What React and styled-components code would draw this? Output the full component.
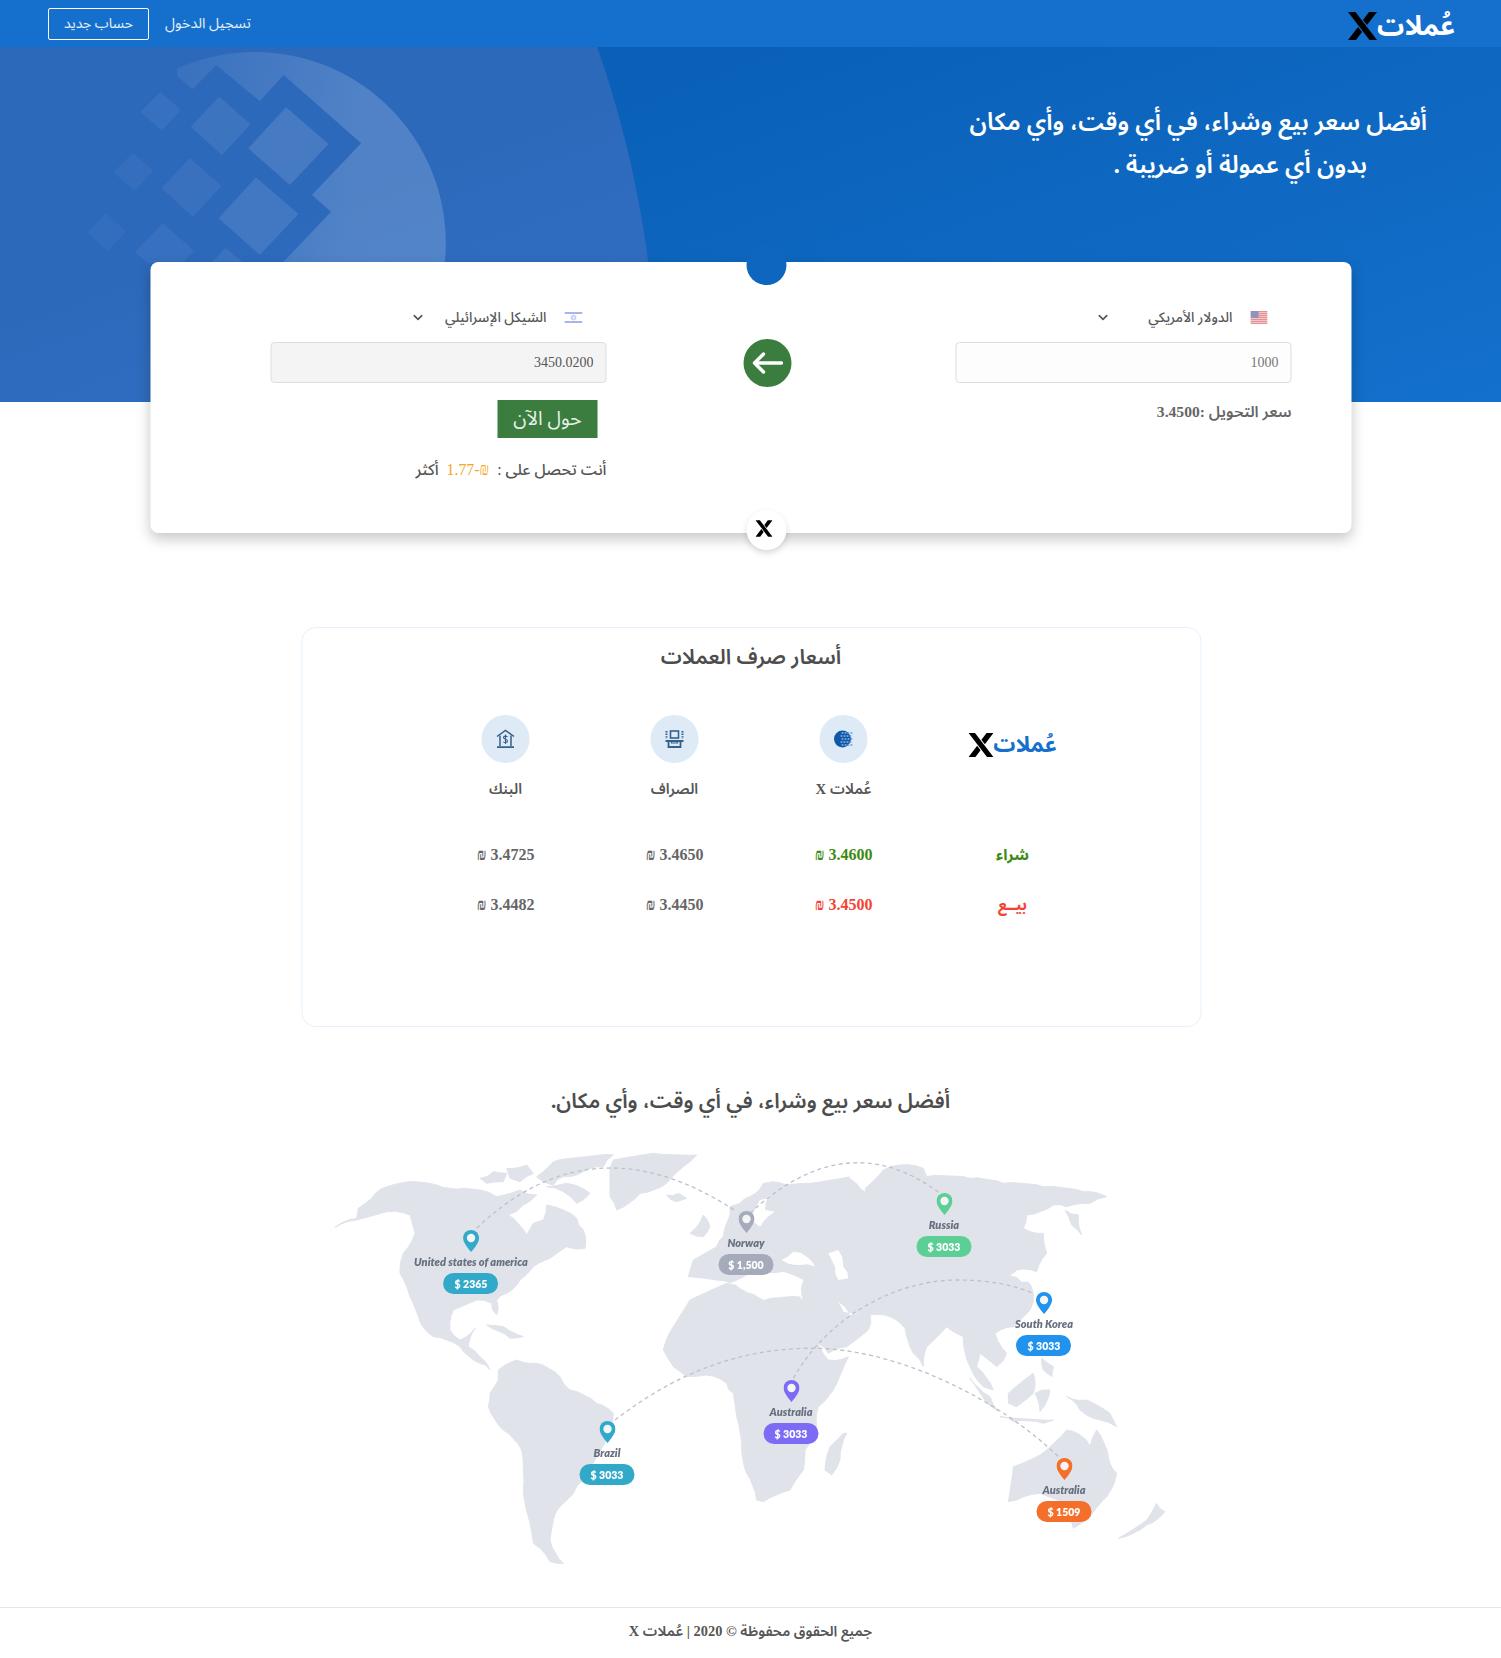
import React from "react";
import styled, { createGlobalStyle } from "styled-components";
import { ChevronDown } from "lucide-react";

const arabic = `"Liberation Serif", "Noto Sans Arabic", "Noto Sans", "DejaVu Sans", serif`;

const GlobalStyle = createGlobalStyle`
  * { box-sizing: border-box; }
  body {
    margin: 0;
    background: #fff;
    font-family: ${arabic};
    color: #555;
  }
`;

const Page = styled.div`
  width: 100%;
  min-height: 1658px;
`;

const Header = styled.header`
  height: 47px;
  background: #1570cd;
  display: flex;
  justify-content: space-between;
  align-items: center;
  padding: 0 46px 0 48px;
`;

const LogoWrap = styled.div`
  display: flex;
  align-items: center;
  direction: ltr;
  padding-top: ${(p) => p.$top || 0}px;
  align-self: ${(p) => (p.$top ? "center" : "start")};
  margin-top: ${(p) => (p.$top ? 0 : 18)}px;
`;

const LogoText = styled.span`
  font-size: ${(p) => p.$size}px;
  font-weight: 700;
  line-height: 1;
  color: ${(p) => p.$color};
`;

const HeaderLinks = styled.nav`
  display: flex;
  align-items: center;
  gap: 16px;
`;

const SignIn = styled.a`
  color: #e6effa;
  font-size: 14.5px;
`;

const SignUp = styled.a`
  color: #e6effa;
  font-size: 14px;
  width: 101px;
  height: 32px;
  border: 1px solid #fff;
  border-radius: 2px;
  display: flex;
  align-items: center;
  justify-content: center;
`;

const Hero = styled.section`
  position: relative;
  height: 355px;
  overflow: hidden;
  background: linear-gradient(160deg, #0a60b7 30%, #1370cc 100%);
`;

const HeroArt = styled.svg`
  position: absolute;
  top: -47px;
  left: 0;
  width: 750px;
  height: 402px;
`;

const HeroTitle = styled.h1`
  position: relative;
  margin: 0;
  padding: 53px 74px 0 0;
  color: #fff;
  font-size: 24.4px;
  font-weight: 600;
  line-height: 43px;
`;

const HeroLine = styled.span`
  display: block;
  margin-right: ${(p) => p.$inset || 0}px;
`;

const Converter = styled.section`
  position: relative;
  width: 1201px;
  height: 271px;
  margin: -140px auto 0;
  transform: translateX(0.5px);
  background: #fff;
  border-radius: 8px;
  box-shadow: 0 6px 14px rgba(0, 0, 0, 0.22);
  display: grid;
  grid-template-columns: 336px 336px;
  justify-content: space-between;
  padding: 0 60px 0 120px;
`;

const TopDot = styled.div`
  position: absolute;
  top: -17px;
  left: 596px;
  width: 40px;
  height: 40px;
  border-radius: 50%;
  background: #0f66bf;
`;

const BottomDot = styled.div`
  position: absolute;
  bottom: -17px;
  left: 596px;
  width: 40px;
  height: 40px;
  border-radius: 50%;
  background: #fff;
  box-shadow: 0 3px 6px rgba(0, 0, 0, 0.15);
  display: flex;
  align-items: center;
  justify-content: center;
  padding: 0 5px 3px 0;
`;

const SwapButton = styled.div`
  position: absolute;
  top: 77px;
  left: 592.5px;
  width: 48px;
  height: 48px;
  border-radius: 50%;
  background: #3b7d3e;
  color: #fff;
  display: flex;
  align-items: center;
  justify-content: center;
`;

const Column = styled.div`
  display: flex;
  flex-direction: column;
`;

const CurrencySelect = styled.div`
  width: 172px;
  height: 36px;
  margin: 37px 24px 7px 0;
  display: flex;
  align-items: center;
  gap: 18px;
  font-size: 13.8px;
  font-weight: 500;
  white-space: nowrap;
  color: #555;
`;

const Chevron = styled.span`
  margin-right: auto;
  display: flex;
  color: #555;
`;

const AmountInput = styled.input`
  width: 100%;
  height: 41px;
  border: 1px solid #ddd;
  border-radius: 4px;
  background: ${(p) => (p.$disabled ? "#f4f4f4" : "#fdfdfd")};
  color: ${(p) => (p.$disabled ? "#555" : "#777")};
  font-family: "Liberation Serif", serif;
  font-size: 14px;
  text-align: right;
  padding: 0 12px;
  outline: none;
`;

const RateLine = styled.div`
  margin-top: 17px;
  font-size: 15.6px;
  line-height: 24px;
  font-weight: 600;
  color: #666;
`;

const ConvertButton = styled.button`
  width: 100px;
  height: 38px;
  margin: 17px 9px 0 0;
  border: 0;
  background: #3b7d3e;
  color: #e8f1e8;
  font-family: ${arabic};
  font-size: 19.5px;
  line-height: 1;
`;

const Gain = styled.div`
  margin-top: 20px;
  font-size: 15.8px;
  line-height: 24px;
  font-weight: 500;
  color: #555;
  display: flex;
  align-items: baseline;
  gap: 8px;
`;

const GainValue = styled.span`
  color: #f5a623;
`;

const RatesBox = styled.section`
  width: 900px;
  height: 400px;
  margin: 94px auto 0;
  transform: translateX(0.5px);
  border: 1px solid #e4f1fd;
  border-radius: 14px;
  padding: 0 103px 0 120px;
`;

const SectionTitle = styled.h2`
  margin: ${(p) => p.$margin};
  text-align: center;
  font-size: ${(p) => p.$size}px;
  font-weight: 600;
  line-height: 30px;
  color: #4d4d4d;
`;

const RatesGrid = styled.div`
  display: grid;
  grid-template-columns: repeat(4, 169px);
  grid-template-rows: 110px 59px 41px;
  margin-top: 43px;
  justify-items: center;
  align-items: center;
`;

const Source = styled.div`
  display: flex;
  flex-direction: column;
  align-items: center;
  align-self: start;
  gap: 11px;
`;

const IconCircle = styled.div`
  width: 48px;
  height: 48px;
  border-radius: 50%;
  background: #deeaf5;
  display: flex;
  align-items: center;
  justify-content: center;
`;

const SourceName = styled.div`
  font-size: 14.8px;
  font-weight: 600;
  color: #555;
`;

const RowLabel = styled.div`
  font-size: 15.5px;
  font-weight: 700;
  color: ${(p) => p.$color};
`;

const Price = styled.div`
  font-size: 16px;
  font-weight: 700;
  color: ${(p) => p.$color || "#666"};
`;

const MapBox = styled.div`
  position: relative;
  width: 859px;
  height: 440px;
  margin: 24px auto 0;
`;

const MapArt = styled.svg`
  display: block;
  width: 859px;
  height: 440px;
  filter: blur(0.6px);
`;

const Marker = styled.div`
  position: absolute;
  left: ${(p) => p.$x}px;
  top: ${(p) => p.$y}px;
  transform: translateX(-50%);
  display: flex;
  flex-direction: column;
  align-items: center;
  font-family: Lato, sans-serif;
  filter: blur(0.3px);
`;

const MarkerName = styled.div`
  margin-top: 4px;
  font-size: 11px;
  line-height: 12px;
  font-weight: 800;
  font-style: italic;
  white-space: nowrap;
  color: #68717f;
`;

const MarkerPrice = styled.div`
  margin-top: 5px;
  width: 55px;
  height: 21px;
  border-radius: 11px;
  background: ${(p) => p.$color};
  color: #fff;
  font-size: 10.5px;
  font-weight: 800;
  display: flex;
  align-items: center;
  justify-content: center;
`;

const Footer = styled.footer`
  margin-top: 27px;
  height: 51px;
  padding-bottom: 4px;
  border-top: 1px solid #e6e6e6;
  display: flex;
  align-items: center;
  justify-content: center;
  font-size: 14.4px;
  font-weight: 600;
  color: #555;
`;

const XMark = ({ width, height }) => (
  <svg width={width} height={height} viewBox="0 0 29 28">
    <path d="M0 0h7.5l21.5 28h-7.5z" fill="#000" />
    <path d="M21 0h8L19 13l-4-5zM0 28h8l6-8-4-5z" fill="#000" />
  </svg>
);

const Logo = ({ color, size, xWidth, xHeight, top }) => (
  <LogoWrap $top={top}>
    <XMark width={xWidth} height={xHeight} />
    <LogoText $color={color} $size={size} dir="rtl">
      عُملات
    </LogoText>
  </LogoWrap>
);

const HeroShapes = () => (
  <HeroArt viewBox="0 0 1568 1206" preserveAspectRatio="none">
    <defs>
      <linearGradient id="glow" x1="0" y1="0.4" x2="1" y2="0.5">
        <stop offset="0.1" stopColor="#fff" stopOpacity="0.02" />
        <stop offset="0.75" stopColor="#fff" stopOpacity="0.17" />
      </linearGradient>
      <clipPath id="lattice">
        <polygon points="370,228 403,268 452,195 543,303 593,225 755,430 652,585 692,635 590,790 1100,1206 1100,100 370,100" />
      </clipPath>
    </defs>
    <ellipse cx="-861" cy="1200" rx="2235" ry="3207" fill="#e79cd4" fillOpacity="0.16" />
    <ellipse cx="533" cy="729" rx="399" ry="573" fill="url(#glow)" clipPath="url(#lattice)" />
    <g fill="#fff">
      <polygon fillOpacity="0.05" points="335,275 378,330 338,392 294,335" />
      <polygon fillOpacity="0.08" points="458,290 524,373 464,465 399,380" />
      <polygon fillOpacity="0.12" points="598,322 687,432 606,555 519,445" />
      <polygon fillOpacity="0.04" points="278,458 320,513 281,573 237,517" />
      <polygon fillOpacity="0.06" points="397,475 463,558 403,650 338,565" />
      <polygon fillOpacity="0.1" points="535,532 624,642 543,765 457,655" />
      <polygon fillOpacity="0.03" points="222,640 263,695 224,752 182,697" />
      <polygon fillOpacity="0.05" points="340,670 406,753 380,790 310,790 282,757" />
      <polygon fillOpacity="0.07" points="472,745 510,790 440,790" />
    </g>
  </HeroArt>
);

const UsFlag = () => (
  <svg width="17" height="13" viewBox="0 0 17 13">
    <rect width="17" height="13" fill="#f3c6c8" />
    {[0, 2, 4, 6, 8, 10, 12].map((y) => (
      <rect key={y} y={y} width="17" height="1" fill="#e58f94" />
    ))}
    <rect width="8" height="7" fill="#8f93bd" />
  </svg>
);

const IlFlag = () => (
  <svg width="18" height="13" viewBox="0 0 18 13">
    <rect y="1" width="18" height="2" fill="#a9b4ee" />
    <rect y="10" width="18" height="2" fill="#a9b4ee" />
    <path d="M9 3.6l2.6 4.4H6.400zM9 9.4L6.4 5h5.2z" fill="none" stroke="#b9c2f0" strokeWidth="0.8" />
  </svg>
);

const SwapArrow = () => (
  <svg width="32" height="24" viewBox="0 0 32 24" fill="none" stroke="#fff" strokeWidth="3.4" strokeLinecap="round" strokeLinejoin="round">
    <path d="M30 12H3M12 3l-9 9 9 9" />
  </svg>
);

const GlobeIcon = () => (
  <svg width="20" height="20" viewBox="0 0 20 20">
    <circle cx="9" cy="10" r="8.5" fill="#0d58a8" />
    {[3, 6, 9, 12, 15].map((y) =>
      [8, 11, 14, 17].map((x) => (
        <circle key={`${x}-${y}`} cx={x + (y % 2)} cy={y + 1} r="1.1" fill="#7ea6d8" />
      ))
    )}
  </svg>
);

const ExchangeIcon = () => (
  <svg width="20" height="20" viewBox="0 0 20 20" fill="none" stroke="#34618c">
    <rect x="6" y="2" width="8" height="7" strokeWidth="1.6" />
    <path d="M2 2v8M18 2v8" strokeWidth="2" strokeDasharray="1.4 1.2" />
    <path d="M1 12h18" strokeWidth="1.8" />
    <path d="M4 12v6h12v-6" strokeWidth="1.8" />
    <path d="M7 12v2h6v-2" strokeWidth="1.2" />
  </svg>
);

const BankIcon = () => (
  <svg width="20" height="20" viewBox="0 0 20 20" fill="none" stroke="#34618c" strokeWidth="1.5">
    <path d="M1.5 7.5L10 1.5l8.5 6" />
    <path d="M4.5 6.5V17M15.5 6.5V17" />
    <path d="M1.5 18.2h17" strokeWidth="1.8" />
    <path d="M12 7.8C11 6.8 8 6.8 8 8.6c0 2 4 1.3 4 3.400 0 1.800-3.100 1.800-4.200.8M10 5.600v9.400" strokeWidth="1.1" />
  </svg>
);

const PinIcon = ({ color }) => (
  <svg width="16" height="22" viewBox="0 0 16 22">
    <path d="M8 0a8 8 0 0 1 8 8c0 4.4-5 10.5-8 14C5 18.5 0 12.4 0 8a8 8 0 0 1 8-8z" fill={color} />
    <circle cx="8" cy="8" r="4.2" fill="#f4f5f7" />
  </svg>
);

const land = "#e0e3e9";

// coastline traced as points, then broken up a little so it doesn't look straight-edged
const rough = (points) => {
  const nums = points.match(/-?\d+/g).map(Number);
  const pts = [];
  for (let i = 0; i < nums.length; i += 2) pts.push([nums[i], nums[i + 1]]);
  let d = "";
  pts.forEach(([x, y], i) => {
    const [nx, ny] = pts[(i + 1) % pts.length];
    const len = Math.hypot(nx - x, ny - y);
    const steps = Math.max(1, Math.round(len / 22));
    for (let s = 0; s < steps; s++) {
      const t = s / steps;
      const wob = s === 0 ? 0 : Math.sin(x * 12.9 + y * 78.2 + s * 37.7) * 5;
      const px = x + (nx - x) * t + (wob * (ny - y)) / len;
      const py = y + (ny - y) * t - (wob * (nx - x)) / len;
      d += `${d ? "L" : "M"}${px.toFixed(1)} ${py.toFixed(1)}`;
    }
  });
  return d + "z";
};

const americas = [
  "45 262 110 235 115 205 155 175 200 140 270 125 350 135 430 145 480 150 530 170 600 150 650 165 610 195 565 225 620 285 640 250 670 240 680 195 730 210 770 235 790 270 795 325 740 320 690 355 640 380 600 420 560 460 530 480 530 525 515 490 470 480 400 510 390 570 420 600 465 565 445 620 480 650 510 690 480 670 420 620 340 590 300 545 270 470 240 400 250 340 285 280 270 225 200 215 110 240",
  "535 690 590 660 650 670 720 710 750 750 830 790 880 820 860 900 790 1020 760 1060 730 1090 700 1140 690 1200 730 1270 690 1265 640 1210 625 1130 610 1050 605 930 550 870 505 800 510 760 535 720",
  "480 115 520 95 560 100 550 125 500 130",
  "560 85 620 75 640 100 600 125 570 115",
  "650 110 700 65 880 45 850 80 790 95 730 110 700 135",
  "680 140 740 130 810 160 770 190 730 155",
  "870 110 880 60 1000 40 1130 45 1090 80 1040 130 960 160 890 210 870 170",
  "1040 165 1075 160 1100 175 1070 185",
  "1110 280 1150 225 1170 260 1150 290",
  "500 555 550 560 610 590 570 595 540 575",
];

const eastern = [
  "-185 410 -170 360 -100 320 -80 290 -70 250 -60 200 -30 190 0 170 40 130 70 125 110 135 180 130 300 110 340 150 400 90 450 75 520 85 530 110 660 115 760 130 880 140 1000 155 1070 170 1020 190 950 200 910 195 830 225 820 265 880 280 890 340 860 395 800 390 780 410 830 420 850 460 840 510 790 560 735 580 770 640 740 680 690 640 680 680 730 750 700 740 660 680 640 590 590 560 530 620 520 680 490 640 465 565 420 530 360 525 355 570 290 620 235 640 205 610 150 505 160 470 100 440 0 450 -100 420",
  "-260 630 -230 560 -180 480 -70 430 0 450 40 480 150 470 165 510 205 610 235 660 295 650 260 730 205 800 200 860 165 930 160 990 120 1050 40 1085 20 1080 -10 1000 -25 920 -40 830 -50 760 -70 730 -130 705 -190 710 -230 680",
  "945 210 985 225 995 285 965 255",
  "290 880 270 960 245 1005 225 990 240 920 280 880",
  "775 760 850 700 850 760 800 800 775 790",
  "660 715 720 770 745 815 710 790",
  "750 830 910 840 880 850 790 845",
  "950 770 1010 780 1080 820 1100 860 1050 840 990 810",
  "875 655 910 680 905 710 880 690",
  "855 760 900 750 870 815",
  "775 1085 790 980 870 945 950 870 990 885 1020 920 1040 870 1075 950 1100 1000 1070 1070 1020 1130 970 1165 950 1090 870 1060 800 1080",
  "1105 1195 1190 1140 1220 1090 1245 1115 1190 1155",
];

const seas = [
  "95 360 130 335 170 350 195 380 150 375",
  "235 340 265 330 280 380 295 415 265 420 255 380",
  "-60 430 0 400 60 400 100 395 160 420 155 470 40 480 20 465 -30 445",
  "265 485 300 525 330 520 280 515",
  "0 240 30 180 60 165 45 210 75 215 30 260",
  "295 110 330 100 345 155 320 130",
  "780 405 820 390 850 420 815 425",
];

const WorldMap = () => (
  <MapArt viewBox="3 0 2577 1320">
    <g fill={land} stroke={land} strokeWidth="3" strokeLinejoin="round">
      {americas.map((p) => (
        <path key={p} d={rough(p)} />
      ))}
    </g>
    <g transform="translate(1290 0)">
      <g fill={land} stroke={land} strokeWidth="3" strokeLinejoin="round">
        {eastern.map((p) => (
          <path key={p} d={rough(p)} />
        ))}
      </g>
      <g fill="#fff">
        {seas.map((p) => (
          <path key={p} d={rough(p)} />
        ))}
      </g>
    </g>
    <g fill="none" stroke="#bcc2cd" strokeWidth="4" strokeDasharray="12 10">
      <path d="M470 265Q820 -70 1250 215" />
      <g transform="translate(1290 0)">
        <path d="M0 220Q290 -50 570 160" />
        <path d="M-405 840C-250 720 -50 620 200 625C450 630 750 780 925 950" />
        <path d="M130 715C240 520 450 420 620 420C720 420 790 435 850 460" />
      </g>
    </g>
  </MapArt>
);

const markers = [
  { name: "United states of america", price: "$ 2365", color: "#33a9c9", x: 150, y: 90 },
  { name: "Norway", price: "$ 1,500", color: "#a5abbb", x: 425, y: 71 },
  { name: "Russia", price: "$ 3033", color: "#5ccf96", x: 623, y: 53 },
  { name: "South Korea", price: "$ 3033", color: "#2192ee", x: 723, y: 152 },
  { name: "Australia", price: "$ 3033", color: "#7c6cf5", x: 470, y: 240 },
  { name: "Brazil", price: "$ 3033", color: "#33a9c9", x: 286, y: 281 },
  { name: "Australia", price: "$ 1509", color: "#f4702a", x: 743, y: 318 },
];

const prices = [
  { source: "عُملات X", icon: <GlobeIcon />, buy: "3.4600", sell: "3.4500", buyColor: "#3c8a10", sellColor: "#f44336" },
  { source: "الصراف", icon: <ExchangeIcon />, buy: "3.4650", sell: "3.4450" },
  { source: "البنك", icon: <BankIcon />, buy: "3.4725", sell: "3.4482" },
];

export default function App() {
  return (
    <Page dir="rtl">
      <GlobalStyle />
      <Header>
        <Logo color="#fff" size={27} xWidth={29} xHeight={28} top={5} />
        <HeaderLinks>
          <SignIn>تسجيل الدخول</SignIn>
          <SignUp>حساب جديد</SignUp>
        </HeaderLinks>
      </Header>

      <Hero>
        <HeroShapes />
        <HeroTitle>
          <HeroLine>أفضل سعر بيع وشراء، في أي وقت، وأي مكان</HeroLine>
          <HeroLine $inset={60}>بدون أي عمولة أو ضريبة .</HeroLine>
        </HeroTitle>
      </Hero>

      <Converter>
        <TopDot />
        <SwapButton>
          <SwapArrow />
        </SwapButton>
        <BottomDot>
          <XMark width={17} height={19} />
        </BottomDot>
        <Column>
          <CurrencySelect>
            <UsFlag />
            <span>الدولار الأمريكي</span>
            <Chevron>
              <ChevronDown size={15} strokeWidth={2.6} />
            </Chevron>
          </CurrencySelect>
          <AmountInput defaultValue="1000" />
          <RateLine>سعر التحويل :3.4500</RateLine>
        </Column>
        <Column>
          <CurrencySelect>
            <IlFlag />
            <span>الشيكل الإسرائيلي</span>
            <Chevron>
              <ChevronDown size={15} strokeWidth={2.6} />
            </Chevron>
          </CurrencySelect>
          <AmountInput $disabled readOnly value="3450.0200" />
          <ConvertButton>حول الآن</ConvertButton>
          <Gain>
            <span>أنت تحصل على :</span>
            <GainValue>₪-1.77</GainValue>
            <span>أكثر</span>
          </Gain>
        </Column>
      </Converter>

      <RatesBox>
        <SectionTitle $size={21} $margin="14px 17px 0 0">
          أسعار صرف العملات
        </SectionTitle>
        <RatesGrid>
          <Logo color="#1570cd" size={22} xWidth={25} xHeight={24} />
          {prices.map((p) => (
            <Source key={p.source}>
              <IconCircle>{p.icon}</IconCircle>
              <SourceName>{p.source}</SourceName>
            </Source>
          ))}
          <RowLabel $color="#3c8a10">شراء</RowLabel>
          {prices.map((p) => (
            <Price key={p.buy} $color={p.buyColor}>
              {p.buy} ₪
            </Price>
          ))}
          <RowLabel $color="#f44336">بيــع</RowLabel>
          {prices.map((p) => (
            <Price key={p.sell} $color={p.sellColor}>
              {p.sell} ₪
            </Price>
          ))}
        </RatesGrid>
      </RatesBox>

      <SectionTitle $size={21} $margin="59px 0 0">
        أفضل سعر بيع وشراء، في أي وقت، وأي مكان.
      </SectionTitle>

      <MapBox dir="ltr">
        <WorldMap />
        {markers.map((m) => (
          <Marker key={m.name + m.price} $x={m.x} $y={m.y}>
            <PinIcon color={m.color} />
            <MarkerName>{m.name}</MarkerName>
            <MarkerPrice $color={m.color}>{m.price}</MarkerPrice>
          </Marker>
        ))}
      </MapBox>

      <Footer>جميع الحقوق محفوظة © 2020 | عُملات X</Footer>
    </Page>
  );
}
